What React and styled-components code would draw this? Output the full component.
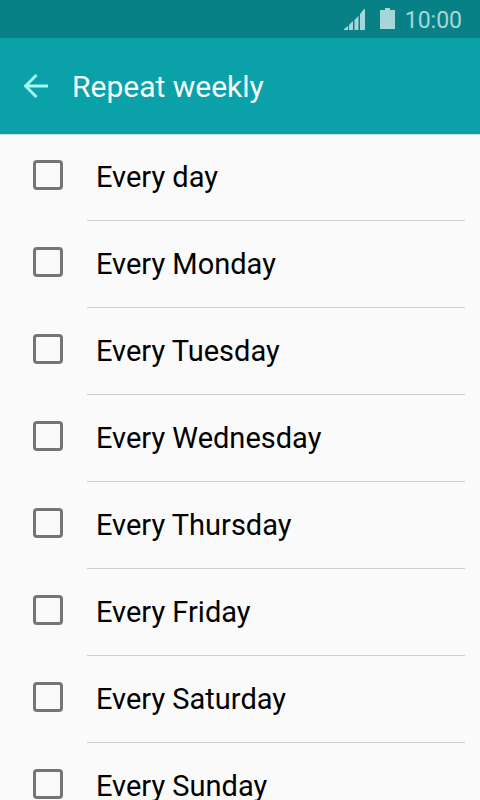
import React from "react";
import styled, { createGlobalStyle } from "styled-components";

const options = [
  "Every day",
  "Every Monday",
  "Every Tuesday",
  "Every Wednesday",
  "Every Thursday",
  "Every Friday",
  "Every Saturday",
  "Every Sunday",
];

function App() {
  return (
    <>
      <GlobalStyle />
      <Screen>
        <StatusBar>
          <StatusIcons>
            <svg width="21" height="22" viewBox="0 0 21 22" fill="currentColor">
              <path d="M0 22v-1l4-3v4zM5 22v-5l4-4v9zM10.500 22V12l4-4v14zM16 22V6l4-5h1v21z" />
            </svg>
            <svg width="15" height="22" viewBox="0 0 15 22" fill="currentColor">
              <path d="M5 0h5v2h5v19H0V2h5z" />
            </svg>
          </StatusIcons>
          <Clock>10:00</Clock>
        </StatusBar>
        <Header>
          <BackButton type="button" aria-label="Back">
            <svg width="24" height="24" viewBox="0 0 24 24" fill="none" stroke="currentColor" strokeWidth="3">
              <path d="M24 12H2M12.500 1L1.500 12L12.500 23" />
            </svg>
          </BackButton>
          <Title>Repeat weekly</Title>
        </Header>
        <List>
          {options.map((option) => (
            <Option key={option}>
              <Checkbox type="checkbox" />
              <Label>{option}</Label>
            </Option>
          ))}
        </List>
      </Screen>
    </>
  );
}

const GlobalStyle = createGlobalStyle`
  * {
    box-sizing: border-box;
  }

  body {
    margin: 0;
    background: #fafafa;
    font-family: Roboto, sans-serif;
  }
`;

const Screen = styled.div`
  height: 100vh;
  display: flex;
  flex-direction: column;
  overflow: hidden;
`;

const StatusBar = styled.div`
  display: flex;
  align-items: center;
  justify-content: flex-end;
  flex-shrink: 0;
  gap: 10px;
  height: 38px;
  padding: 4px 18px 0;
  background: #088186;
  color: #a5d6d8;
`;

const StatusIcons = styled.div`
  display: flex;
  gap: 15px;
  padding-bottom: 4px;
`;

const Clock = styled.span`
  font-size: 23px;
  line-height: 34px;
`;

const Header = styled.header`
  display: flex;
  align-items: center;
  flex-shrink: 0;
  gap: 24px;
  height: 96px;
  padding: 0 24px;
  background: #0aa1a9;
  color: #fafafa;
`;

const BackButton = styled.button`
  display: flex;
  padding: 0;
  border: none;
  background: none;
  color: #a3fbf5;
  cursor: pointer;
`;

const Title = styled.h1`
  margin: 0;
  font-size: 30px;
  font-weight: 400;
`;

const List = styled.div`
  overflow-y: auto;
  scrollbar-width: none;
  box-shadow: inset 0 1px 0 #c4e0e2;
`;

const Option = styled.label`
  display: flex;
  align-items: center;
  height: 87px;
  padding: 0 15px 0 33px;
  cursor: pointer;
`;

const Checkbox = styled.input`
  appearance: none;
  flex-shrink: 0;
  width: 30px;
  height: 30px;
  margin: 0 24px 5px 0;
  border: 3px solid #757575;
  border-radius: 4px;

  &:checked {
    background: #0aa1a9;
  }
`;

const Label = styled.span`
  flex: 1;
  padding-left: 9px;
  border-bottom: 1px solid #cccccc;
  color: #000000;
  font-size: 29px;
  line-height: 86px;
`;

export default App;
